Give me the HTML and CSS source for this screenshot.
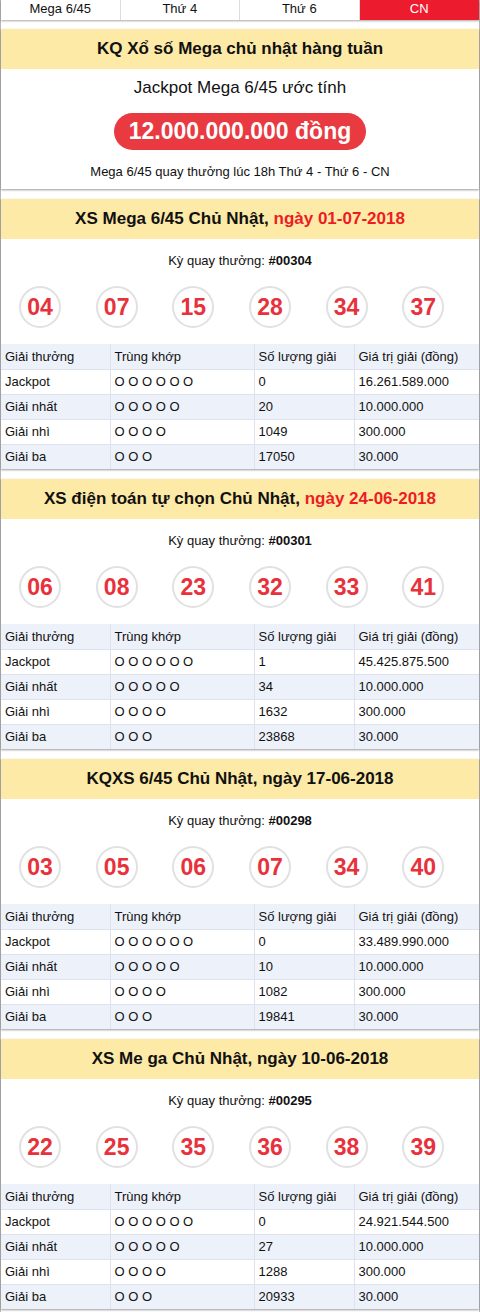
FILE: index.html
```html
<!DOCTYPE html>
<html lang="vi">
<head>
<meta charset="utf-8">
<title>KQ Xổ số Mega chủ nhật</title>
<link rel="stylesheet" href="styles.css">
</head>
<body>
<div class="page">
  <nav class="tabs">
    <a class="tab">Mega 6/45</a>
    <a class="tab">Thứ 4</a>
    <a class="tab">Thứ 6</a>
    <a class="tab active">CN</a>
  </nav>

  <section class="card">
    <h2 class="card-title">KQ Xổ số Mega chủ nhật hàng tuần</h2>
    <div class="jackpot">
      <div class="jackpot-label">Jackpot Mega 6/45 ước tính</div>
      <div class="jackpot-pill">12.000.000.000 đồng</div>
      <div class="jackpot-note">Mega 6/45 quay thưởng lúc 18h Thứ 4 - Thứ 6 - CN</div>
    </div>
  </section>

  <section class="card">
    <h2 class="card-title">XS Mega 6/45 Chủ Nhật, <span class="red">ngày 01-07-2018</span></h2>
    <div class="draw">Kỳ quay thưởng: <b>#00304</b></div>
    <div class="balls"><span class="ball">04</span><span class="ball">07</span><span class="ball">15</span><span class="ball">28</span><span class="ball">34</span><span class="ball">37</span></div>
    <table class="prizes">
      <tr><td>Giải thưởng</td><td>Trùng khớp</td><td>Số lượng giải</td><td>Giá trị giải (đồng)</td></tr>
      <tr><td>Jackpot</td><td>O O O O O O</td><td>0</td><td>16.261.589.000</td></tr>
      <tr><td>Giải nhất</td><td>O O O O O</td><td>20</td><td>10.000.000</td></tr>
      <tr><td>Giải nhì</td><td>O O O O</td><td>1049</td><td>300.000</td></tr>
      <tr><td>Giải ba</td><td>O O O</td><td>17050</td><td>30.000</td></tr>
    </table>
  </section>

  <section class="card">
    <h2 class="card-title">XS điện toán tự chọn Chủ Nhật, <span class="red">ngày 24-06-2018</span></h2>
    <div class="draw">Kỳ quay thưởng: <b>#00301</b></div>
    <div class="balls"><span class="ball">06</span><span class="ball">08</span><span class="ball">23</span><span class="ball">32</span><span class="ball">33</span><span class="ball">41</span></div>
    <table class="prizes">
      <tr><td>Giải thưởng</td><td>Trùng khớp</td><td>Số lượng giải</td><td>Giá trị giải (đồng)</td></tr>
      <tr><td>Jackpot</td><td>O O O O O O</td><td>1</td><td>45.425.875.500</td></tr>
      <tr><td>Giải nhất</td><td>O O O O O</td><td>34</td><td>10.000.000</td></tr>
      <tr><td>Giải nhì</td><td>O O O O</td><td>1632</td><td>300.000</td></tr>
      <tr><td>Giải ba</td><td>O O O</td><td>23868</td><td>30.000</td></tr>
    </table>
  </section>

  <section class="card">
    <h2 class="card-title">KQXS 6/45 Chủ Nhật, ngày 17-06-2018</h2>
    <div class="draw">Kỳ quay thưởng: <b>#00298</b></div>
    <div class="balls"><span class="ball">03</span><span class="ball">05</span><span class="ball">06</span><span class="ball">07</span><span class="ball">34</span><span class="ball">40</span></div>
    <table class="prizes">
      <tr><td>Giải thưởng</td><td>Trùng khớp</td><td>Số lượng giải</td><td>Giá trị giải (đồng)</td></tr>
      <tr><td>Jackpot</td><td>O O O O O O</td><td>0</td><td>33.489.990.000</td></tr>
      <tr><td>Giải nhất</td><td>O O O O O</td><td>10</td><td>10.000.000</td></tr>
      <tr><td>Giải nhì</td><td>O O O O</td><td>1082</td><td>300.000</td></tr>
      <tr><td>Giải ba</td><td>O O O</td><td>19841</td><td>30.000</td></tr>
    </table>
  </section>

  <section class="card">
    <h2 class="card-title">XS Me ga Chủ Nhật, ngày 10-06-2018</h2>
    <div class="draw">Kỳ quay thưởng: <b>#00295</b></div>
    <div class="balls"><span class="ball">22</span><span class="ball">25</span><span class="ball">35</span><span class="ball">36</span><span class="ball">38</span><span class="ball">39</span></div>
    <table class="prizes">
      <tr><td>Giải thưởng</td><td>Trùng khớp</td><td>Số lượng giải</td><td>Giá trị giải (đồng)</td></tr>
      <tr><td>Jackpot</td><td>O O O O O O</td><td>0</td><td>24.921.544.500</td></tr>
      <tr><td>Giải nhất</td><td>O O O O O</td><td>27</td><td>10.000.000</td></tr>
      <tr><td>Giải nhì</td><td>O O O O</td><td>1288</td><td>300.000</td></tr>
      <tr><td>Giải ba</td><td>O O O</td><td>20933</td><td>30.000</td></tr>
    </table>
  </section>
</div>
</body>
</html>
```

FILE: styles.css
```css
* { box-sizing: border-box; }
html, body { margin: 0; padding: 0; background: #fff; }
body {
  font-family: "Liberation Sans", Arial, sans-serif;
  color: #111;
  font-size: 13px;
}
.page {
  width: 480px;
  min-height: 1312px;
  border-left: 1px solid #b8b8b8;
  border-right: 1px solid #b8b8b8;
}
.tabs {
  display: grid;
  grid-template-columns: repeat(4, 1fr);
  height: 20px;
  box-shadow: 0 1px 2px rgba(0,0,0,0.35);
  margin-bottom: 9px;
}
.tab {
  display: block;
  text-align: center;
  line-height: 18px;
  font-size: 13px;
  color: #111;
  border-right: 1px solid #dcdcdc;
}
.tab:last-child { border-right: 0; }
.tab.active { background: #ed1b2e; color: #fff; }

.card {
  box-shadow: 0 1px 2px rgba(0,0,0,0.4);
  margin-bottom: 10px;
}
.card-title {
  margin: 0;
  height: 40px;
  line-height: 40px;
  background: #fdeaa6;
  text-align: center;
  font-size: 17px;
  font-weight: bold;
  color: #111;
}
.red { color: #ed1c24; }

.jackpot {
  padding: 9px 0 9px;
  text-align: center;
}
.jackpot-label {
  font-size: 17px;
  line-height: 20px;
}
.jackpot-pill {
  display: inline-block;
  margin-top: 15px;
  height: 37px;
  line-height: 37px;
  padding: 0 15px;
  border-radius: 19px;
  background: #e93a42;
  color: #fff;
  font-size: 23px;
  font-weight: bold;
}
.jackpot-note {
  margin-top: 14px;
  font-size: 13px;
  line-height: 16px;
}

.draw {
  text-align: center;
  padding-top: 14px;
  line-height: 16px;
  font-size: 13px;
}
.draw b { font-weight: bold; }
.balls {
  display: grid;
  grid-template-columns: repeat(6, 42px);
  column-gap: 34.67px;
  padding: 17px 0 0 18px;
}
.ball {
  width: 42px;
  height: 42px;
  border: 2px solid #e1e1e1;
  border-radius: 50%;
  display: flex;
  align-items: center;
  justify-content: center;
  color: #e8313b;
  font-size: 23px;
  font-weight: bold;
}
.prizes {
  margin-top: 16px;
  width: 100%;
  border-collapse: collapse;
  table-layout: fixed;
}
.prizes td {
  height: 25px;
  padding: 0 4px;
  font-size: 13px;
  border: 1px solid #dde2ec;
  white-space: nowrap;
}
.prizes tr td:first-child { border-left: 0; width: 109px; }
.prizes tr td:nth-child(2) { width: 144px; }
.prizes tr td:nth-child(3) { width: 100px; }
.prizes tr td:last-child { border-right: 0; }
.prizes tr:first-child td { border-top: 0; }
.prizes tr:last-child td { border-bottom: 0; }
.prizes tr:nth-child(odd) { background: #edf1f9; }
.prizes tr:nth-child(even) { background: #fff; }
```
